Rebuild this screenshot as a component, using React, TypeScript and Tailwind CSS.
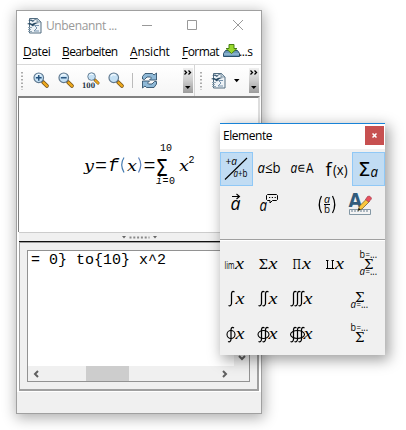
import React from "react";

const SANS = "font-['Open_Sans','Noto_Sans',sans-serif]";
const MONO = "font-['Liberation_Mono',monospace]";

function AppIcon() {
  return (
    <svg width="15" height="17" viewBox="0 0 15 17" className="shrink-0">
      <path d="M2.500 1.500h8l3.500 3.500v11h-11.500z" fill="#eef3f7" stroke="#526c80" />
      <path d="M10 1v4h4z" fill="#c5d4df" stroke="#627b8e" strokeWidth=".7" />
      <path d="M1 3.500q3-2 5 0q2-2 4-1q-3 0-4 2.500q-2-2-5-1.500z" fill="#3d5d77" />
      <path d="M0 7q3-2 5 0q3-2.500 7-1q-4 0-6 3.500q-2-2.500-6-2.500z" fill="#274963" />
      <path d="M1 10.500h4M1 12.500h3M1 14.500h4" stroke="#8fa5b5" />
      <path d="M12 8.500H7.500l2.500 2.500-3 3h5" fill="none" stroke="#7793ad" />
    </svg>
  );
}

function Lens({ kind }: { kind: "plus" | "minus" | "hundred" | "plain" }) {
  const small = kind === "hundred";
  return (
    <svg width="17" height="18" viewBox="0 0 17 18" className="shrink-0 overflow-visible">
      <g transform={small ? "translate(4 0) scale(.76)" : "scale(.96)"}>
        <path d="M10.500 10.500l4 4" stroke="#71501a" strokeWidth="4" strokeLinecap="round" />
        <path d="M11 11l3.500 3.500" stroke="#eea91d" strokeWidth="2.500" strokeLinecap="round" />
        <circle cx="6" cy="6" r="5" fill="#c4e0f4" stroke="#60798f" strokeWidth="1.200" />
        <path d="M3 4.500q2-3 5-1" stroke="#f5fbff" strokeWidth="1.300" fill="none" />
        {kind === "plus" && <path d="M3 6h6M6 3v6" stroke="#24517c" strokeWidth="1.500" />}
        {kind === "minus" && <path d="M3 6h6" stroke="#24517c" strokeWidth="1.500" />}
      </g>
      {small && (
        <text x="-1" y="16" fontSize="7.500" fontWeight="700" fontFamily="DejaVu Serif" fill="#1d3345" textLength="13" lengthAdjust="spacingAndGlyphs">
          100
        </text>
      )}
    </svg>
  );
}

function Refresh() {
  return (
    <svg width="17" height="17" viewBox="0 0 17 17" className="shrink-0">
      <g fill="#8fb9d7" stroke="#31516b" strokeWidth=".9">
        <path d="M1.500 7V4.500L4 1.500h7.500l1.500 1.500L15.500 1v7H8.500l2-2-1-1H6L3.500 7.500z" />
        <path d="M15.500 9.500v2.500L13 15.500H5.500l-1.500-1.500L1.500 16V9h7l-2 2 1 1H11l2.500-2.500z" />
      </g>
    </svg>
  );
}

function Overflow() {
  return (
    <div className="flex h-[25px] w-[10px] shrink-0 flex-col bg-linear-to-b from-[#f0f0f0] via-[#cccccc] to-[#9c9c9c]">
      <svg width="10" height="25" viewBox="0 0 10 25">
        <path d="M1.500 2.500l2 2-2 2M5.500 2.500l2 2-2 2" fill="none" stroke="#000" strokeWidth="1.300" />
        <path d="M2 18h5.500l-2.700 3z" />
      </svg>
    </div>
  );
}

function Grip() {
  return (
    <svg width="2" height="18" viewBox="0 0 2 18" className="shrink-0">
      <path d="M1 0v18" stroke="#777" strokeWidth="1.200" strokeDasharray="1.500 2" />
    </svg>
  );
}

function MenuItem({ first, rest, box, gap }: { first: string; rest: string; box: string; gap: string }) {
  return (
    <span className={`${box} shrink-0 whitespace-nowrap ${gap}`}>
      <span className="underline underline-offset-2">{first}</span>
      {rest}
    </span>
  );
}

function Txt({ x, y, s = 13, w, children, f = "Open Sans", italic = false }: {
  x: number; y: number; s?: number; w?: number; children: React.ReactNode; f?: string; italic?: boolean;
}) {
  return (
    <text x={x} y={y} fontSize={s} fontFamily={f} fontStyle={italic ? "italic" : "normal"} textLength={w} lengthAdjust="spacingAndGlyphs">
      {children}
    </text>
  );
}

const X = ({ x, y }: { x: number; y: number }) => (
  <Txt x={x + 0.5} y={y} s={17} w={9} f="Liberation Serif" italic>x</Txt>
);
const Sum = ({ x, y }: { x: number; y: number }) => <Txt x={x} y={y} s={13.5} w={9.5} f="DejaVu Serif">Σ</Txt>;

/** Lower or upper bound such as "a=..." beside a sum sign. */
const Bound = ({ x, y, v }: { x: number; y: number; v: string }) => (
  <>
    <Txt x={x} y={y} s={10.5} w={5.5} italic={v === "a"}>{v}</Txt>
    <Txt x={x + 6} y={y} s={9} w={4.5}>=</Txt>
    <Txt x={x + 10.5} y={y} s={10} w={7}>...</Txt>
  </>
);

function Integrals({ n, x, y, ring }: { n: number; x: number; y: number; ring?: boolean }) {
  return (
    <g fill="none" stroke="#000" strokeWidth="1.250">
      {Array.from({ length: n }, (_, i) => (
        <path key={i} d={`M${x + 6 + i * 4} ${y + 1}q-2.500-1.500-3 1.500v10q-.5 3-3 2`} />
      ))}
      {ring && <ellipse cx={x + 3 + (n - 1) * 2} cy={y + 7.500} rx={4 + (n - 1) * 1.500} ry="4" strokeWidth="1.100" />}
    </g>
  );
}

function Tile({ x, y, h = 34, on, children }: { x: number; y: number; h?: number; on?: boolean; children?: React.ReactNode }) {
  return (
    <div className={on ? "bg-[#c1dcf3] outline -outline-offset-1 outline-[#90c8f6]" : ""}>
      <svg width="33" height={h} viewBox={`${x} ${y} 33 ${h}`} className="block overflow-visible">
        {children}
      </svg>
    </div>
  );
}

const A = () => <tspan fontStyle="italic">a</tspan>;

function Palette() {
  return (
    <div className={`absolute left-[220px] top-[123px] flex h-[232px] w-[165px] flex-col border-t border-[#1883d7] bg-[#f0f0f0] shadow-[3px_4px_13px_1px_rgba(0,0,0,0.38)] ${SANS}`}>
      <div className="flex h-[25px] shrink-0 items-start justify-between bg-white pl-[3px] pr-px pt-[2px]">
        <span className="text-[12px] leading-[20px] tracking-[-0.45px] text-black">Elemente</span>
        <span className="flex h-[19px] w-[19px] items-center justify-center bg-[#c75050]">
          <svg width="5" height="5" viewBox="0 0 5 5"><path d="M.5.500l4 4m0-4l-4 4" stroke="white" strokeWidth="1.500" /></svg>
        </span>
      </div>
      <div className="mt-[3px] grid h-[69px] shrink-0 grid-cols-5 grid-rows-[34px_34px] gap-y-px">
        <Tile x={220} y={152} on>
          <Txt x={225.500} y={165} s={10.5} w={11.500}>+<A /></Txt>
          <path d="M225 179.500l22-21.500" stroke="#000" strokeWidth="1.100" />
          <Txt x={233.500} y={177} s={10.5} w={14}><A />+b</Txt>
        </Tile>
        <Tile x={253} y={152}><Txt x={257.500} y={173} s={15} w={23}><A />≤b</Txt></Tile>
        <Tile x={286} y={152}><Txt x={290.500} y={173} s={15} w={23}><A />∊A</Txt></Tile>
        <Tile x={319} y={152}>
          <Txt x={325.500} y={176} s={18}>f</Txt>
          <Txt x={333} y={175} s={14} w={14.500}>(x)</Txt>
        </Tile>
        <Tile x={352} y={152} on>
          <Txt x={358} y={176} s={20} w={12.500} f="DejaVu Sans">Σ</Txt>
          <Txt x={370.500} y={177} s={14} w={7.500} italic>a</Txt>
        </Tile>
        <Tile x={220} y={187}>
          <Txt x={230.500} y={210} s={18.500} w={10} italic>a</Txt>
          <path d="M232 196.500h7m-2.500-2.500l3 2.500-3 2.500" fill="none" stroke="#000" strokeWidth="1.100" />
        </Tile>
        <Tile x={253} y={187}>
          <Txt x={259.500} y={211} s={16} w={7.500} italic>a</Txt>
          <path d="M267.500 194.500h9l1 1v4l-1 1h-4l-2.500 2.500v-2.500h-2.500l-1-1v-4z" fill="none" stroke="#000" />
          <path d="M269 197.500h7" stroke="#000" strokeWidth="1.200" strokeDasharray="1.200 1.600" />
        </Tile>
        <Tile x={286} y={187} />
        <Tile x={319} y={187}>
          <path d="M321.500 196q-4.500 8.500 0 17M332.500 196q4.500 8.500 0 17" fill="none" stroke="#000" strokeWidth="1.200" />
          <Txt x={324} y={202.500} s={10.5} w={6} italic>a</Txt>
          <path d="M324 204.500h6" stroke="#000" />
          <Txt x={324} y={213} s={10} w={6}>b</Txt>
        </Tile>
        <Tile x={352} y={187}>
          <path d="M349.500 209.500h21v5h-21z" fill="#f4f4f4" stroke="#8498a5" />
          <path d="M352 212v-2m3 2v-2m3 2v-2m3 2v-2m3 2v-2m3 2v-2" stroke="#647b8d" />
          <text x="348.500" y="206.500" fontFamily="DejaVu Sans" fontWeight="700" fontSize="19" fill="#315b7b" textLength="13.500" lengthAdjust="spacingAndGlyphs">A</text>
          <path d="M358 210.500l1.500-4.500 7-7 3 2.500-7.500 7.500z" fill="#f9c63d" stroke="#63542b" strokeWidth=".7" />
          <path d="M365.500 199.500l2-3 2-.5 2 2-.5 1.500-2.500 2.500z" fill="#e9515d" stroke="#963044" strokeWidth=".6" />
          <path d="M358 210.500l.8-2.500 1.700 1.500z" />
        </Tile>
      </div>
      <div className="mt-[18px] h-[2px] shrink-0 border-b border-white bg-[#a0a0a0]" />
      <div className="mt-[6px] grid grid-cols-5 grid-rows-[35px_35px_35px]">
        <Tile x={220} y={247} h={35}><Txt x={224.500} y={269} s={10.500} w={10}>lim</Txt><X x={234.500} y={269} /></Tile>
        <Tile x={253} y={247} h={35}><Sum x={258.500} y={269} /><X x={268} y={269} /></Tile>
        <Tile x={286} y={247} h={35}><Txt x={292.500} y={269} s={12.500} w={8.500} f="DejaVu Serif">Π</Txt><X x={301.500} y={269} /></Tile>
        <Tile x={319} y={247} h={35}>
          <path d="M326 268.500h8M326 260.500h2.500m3 0h2.500M327.500 260.500v8m5-8v8" fill="none" stroke="#000" />
          <X x={334.500} y={269} />
        </Tile>
        <Tile x={352} y={247} h={35}><Bound x={359.500} y={258} v="b" /><Sum x={364} y={269} /><Bound x={359.500} y={274.500} v="a" /></Tile>
        <Tile x={220} y={282} h={35}><Integrals n={1} x={228.500} y={291} /><X x={235} y={304} /></Tile>
        <Tile x={253} y={282} h={35}><Integrals n={2} x={258.500} y={291} /><X x={268} y={304} /></Tile>
        <Tile x={286} y={282} h={35}><Integrals n={3} x={290.500} y={291} /><X x={303} y={304} /></Tile>
        <Tile x={319} y={282} h={35} />
        <Tile x={352} y={282} h={35}><Sum x={355} y={302} /><Bound x={350.500} y={308} v="a" /></Tile>
        <Tile x={220} y={317} h={35}><Integrals n={1} x={228} y={327} ring /><X x={235} y={339} /></Tile>
        <Tile x={253} y={317} h={35}><Integrals n={2} x={258.500} y={327} ring /><X x={268} y={339} /></Tile>
        <Tile x={286} y={317} h={35}><Integrals n={3} x={290.500} y={327} ring /><X x={303} y={339} /></Tile>
        <Tile x={319} y={317} h={35} />
        <Tile x={352} y={317} h={35}><Bound x={350.500} y={330.500} v="b" /><Sum x={355} y={342} /></Tile>
      </div>
    </div>
  );
}

function Formula() {
  return (
    <svg width="114" height="44" viewBox="82 142 114 44" className="block">
      <g fontFamily="DejaVu Serif" fontStyle="italic" fontSize="15.500" fill="#000">
        <text x="84" y="170.500" textLength="10" lengthAdjust="spacingAndGlyphs">y</text>
        <text x="127" y="170.500" textLength="10" lengthAdjust="spacingAndGlyphs">x</text>
        <text x="179" y="170.500" textLength="10" lengthAdjust="spacingAndGlyphs">x</text>
      </g>
      <g fontFamily="Liberation Mono" fontSize="18">
        <text x="95" y="171" textLength="12" lengthAdjust="spacingAndGlyphs">=</text>
        <text x="108" y="170.500" fontStyle="italic">f</text>
        <text x="143.500" y="171" textLength="12" lengthAdjust="spacingAndGlyphs">=</text>
      </g>
      <path d="M124 157.500q-4.500 7 0 15" fill="none" stroke="#447bb0" strokeWidth="1.200" />
      <path d="M138.500 157.500q4.500 7 0 15" fill="none" stroke="#5c82bd" strokeWidth="1.200" />
      <g fontFamily="Liberation Mono" fontSize="10">
        <text x="160" y="151">10</text>
        <text x="156" y="183.500" textLength="19"><tspan fontStyle="italic">i</tspan>=0</text>
        <text x="188.500" y="162.500">2</text>
      </g>
      <text x="155.500" y="175.500" fontSize="22.500" fontFamily="DejaVu Sans" textLength="12.500" lengthAdjust="spacingAndGlyphs">Σ</text>
    </svg>
  );
}

export default function App() {
  return (
    <main className="relative h-[430px] w-[406px] overflow-hidden bg-white">
      <div className="absolute left-[16px] top-[10px] flex h-[404px] w-[246px] flex-col border border-[#a0a0a0] bg-white shadow-[1px_3px_13px_1px_rgba(0,0,0,0.32)]">
        <header className={`flex h-[29px] shrink-0 items-center pl-[10px] text-[12px] text-[#999] ${SANS}`}>
          <AppIcon />
          <span className="ml-[4px] w-[94px] whitespace-nowrap tracking-[-0.38px]">Unbenannt ...</span>
          <svg width="104" height="12" viewBox="0 0 104 12" fill="none" stroke="#999" className="-mt-px ml-px shrink-0">
            <path d="M1 6.500h10M46.500 1.500h9v9h-9zM92 1l10 10m0-10L92 11" />
          </svg>
        </header>
        <nav className={`flex h-[24px] shrink-0 items-center pl-[6px] text-[12px] text-black ${SANS}`}>
          <MenuItem first="D" rest="atei" box="w-[39px]" gap="tracking-[-0.4px]" />
          <MenuItem first="B" rest="earbeiten" box="w-[68px]" gap="tracking-[-0.6px]" />
          <MenuItem first="A" rest="nsicht" box="w-[52px]" gap="tracking-[-0.2px]" />
          <MenuItem first="F" rest="ormat" box="w-[41px]" gap="tracking-[-0.55px]" />
          <svg width="17" height="14" viewBox="0 0 17 14" className="-mt-[2px] shrink-0">
            <path d="M2.500 6.500h12l2 3v3H.5v-3z" fill="#6997b9" stroke="#294f6c" />
            <path d="M1 10h15" stroke="#a9c9df" />
            <path d="M6 .5h5v4h3L8.500 9.500 3 4.500h3z" fill="#98d82b" stroke="#498013" />
          </svg>
          <span className="-ml-px tracking-[-0.4px]">...s</span>
        </nav>
        <div className="flex h-[32px] shrink-0 items-center border-t border-[#d9d9d9] bg-linear-to-b from-white to-[#f5f5f5] pl-[4px]">
          <Grip />
          <div className="ml-[10px] flex w-[92px] shrink-0 justify-between">
            <Lens kind="plus" /><Lens kind="minus" /><Lens kind="hundred" /><Lens kind="plain" />
          </div>
          <div className="ml-[7px] mr-[8px] h-[15px] w-px shrink-0 bg-[#bbb]" />
          <Refresh />
          <div className="w-[25px] shrink-0" />
          <Overflow />
          <div className="ml-px mr-[5px] h-full w-px shrink-0 bg-[#d5d5d5]" />
          <Grip />
          <div className="w-[9px] shrink-0" />
          <AppIcon />
          <svg width="6" height="4" viewBox="0 0 6 4" className="ml-[8px] mr-[9px] shrink-0"><path d="M0 0h5.500L2.700 3.200z" /></svg>
          <Overflow />
        </div>
        <section className="ml-px mr-px flex h-[136px] shrink-0 flex-col border-l border-r-2 border-t-2 border-[#808080] border-r-[#dddddd] bg-white">
          <div className="ml-[63px] mt-[44px]"><Formula /></div>
        </section>
        <div className="mx-[2px] flex h-[10px] shrink-0 items-center justify-center border-b border-t border-b-[#111] border-t-[#ccc] bg-[#f0f0f0]">
          <svg width="35" height="3" viewBox="0 0 35 3" fill="#666">
            <path d="M0 0h4L2 2.500zM31 0h4l-2 2.500z" />
            <path d="M7.500 1.500h20" stroke="#888" strokeWidth="2" strokeDasharray="2 1.800" />
          </svg>
        </div>
        <section className="mx-[2px] flex h-[149px] shrink-0 flex-col border-b-2 border-l border-r-2 border-t border-[#a0a0a0] bg-[#f0f0f0] pb-[7px] pl-[7px] pr-[7px] pt-[7px]">
          <div className="flex min-h-0 flex-1 flex-col border border-[#929292] bg-[#f0f0f0]">
            <div className="flex min-h-0 flex-1">
              <pre className={`m-0 w-[206px] overflow-hidden bg-white pl-[3px] pt-px text-[15px] leading-[17px] text-black ${MONO}`}>{"= 0} to{10} x^2"}</pre>
              <div className="flex flex-1 items-end justify-center pb-[5px]">
                <svg width="8" height="6" viewBox="0 0 8 6"><path d="M1 1l3 3 3-3" fill="none" stroke="#606060" strokeWidth="2" /></svg>
              </div>
            </div>
            <div className="flex h-[15px] shrink-0 items-center">
              <svg width="6" height="8" viewBox="0 0 6 8" className="ml-[5px]"><path d="M5 1L2 4l3 3" fill="none" stroke="#606060" strokeWidth="2" /></svg>
              <div className="ml-[47px] h-full w-[43px] bg-[#cdcdcd]" />
              <svg width="6" height="8" viewBox="0 0 6 8" className="ml-[93px]"><path d="M1 1l3 3-3 3" fill="none" stroke="#606060" strokeWidth="2" /></svg>
            </div>
          </div>
        </section>
        <footer className="mt-px min-h-0 flex-1 bg-[#f0f0f0]" />
      </div>
      <Palette />
    </main>
  );
}
